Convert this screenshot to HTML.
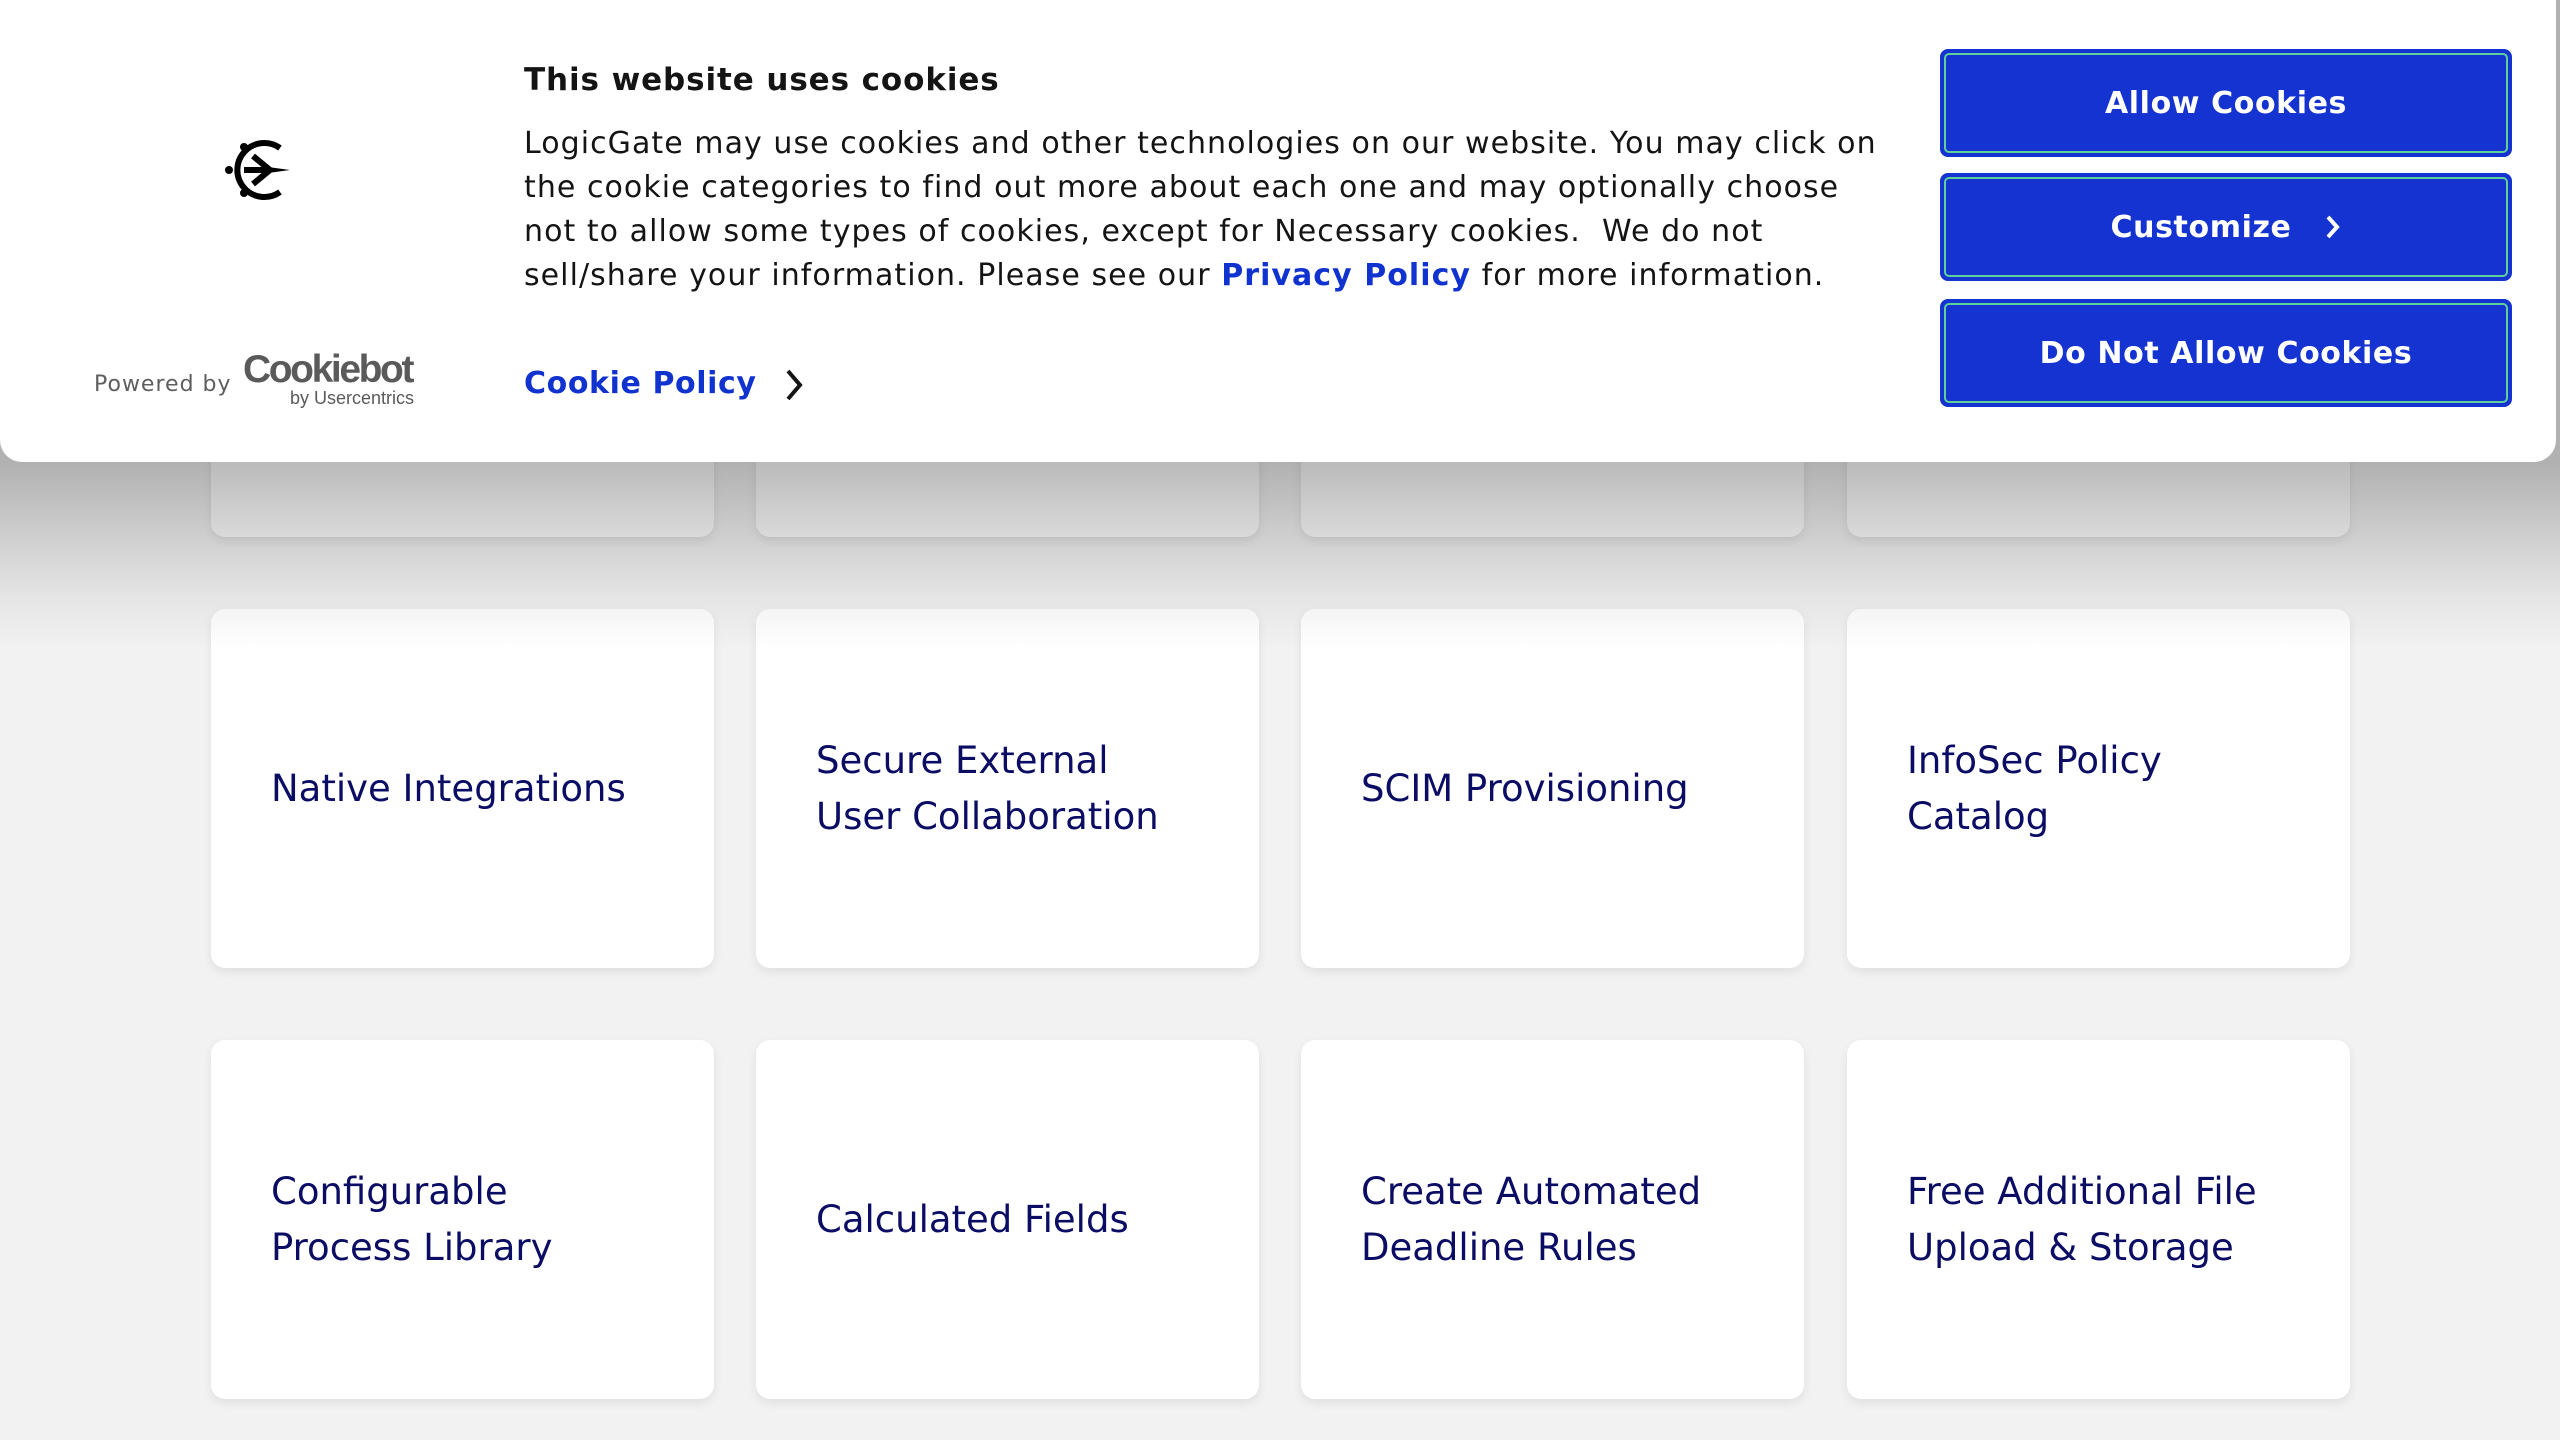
<!DOCTYPE html>
<html><head><meta charset="utf-8">
<style>
*{margin:0;padding:0;box-sizing:border-box}
html,body{width:2560px;height:1440px;overflow:hidden;background:#f2f2f2;font-family:"DejaVu Sans","Liberation Sans",sans-serif}
.card{position:absolute;width:503px;height:359px;background:#fff;border-radius:14px;box-shadow:0 4px 10px rgba(0,0,0,.08);display:flex;align-items:center;padding-left:60px;color:#0b0c63;font-size:37px;line-height:56px}
.shade{position:absolute;left:0;top:0;width:2560px;height:660px;background:linear-gradient(rgba(0,0,0,.27) 0,rgba(0,0,0,.27) 462px,rgba(0,0,0,.14) 540px,rgba(0,0,0,.05) 600px,rgba(0,0,0,0) 650px);pointer-events:none}
.dlg{position:absolute;left:0;top:0;width:2556px;height:462px;background:#fff;border-radius:0 0 22px 22px}
.t{position:absolute;left:524px;top:62px;font-size:31px;font-weight:bold;color:#141414;letter-spacing:.9px}
.b{position:absolute;left:524px;top:122px;font-size:30px;line-height:44px;color:#141414;letter-spacing:1.05px;white-space:nowrap}
.b a{color:#1032cf;font-weight:bold;text-decoration:none}
.cp{position:absolute;left:524px;top:366px;font-size:30px;font-weight:bold;color:#1032cf;letter-spacing:.6px}
.btn{position:absolute;left:1940px;width:572px;height:108px;background:#1433d0;border-radius:8px;border:3px solid #1433d0;color:#fff;font-weight:bold;font-size:30px;letter-spacing:.6px;display:flex;align-items:center;justify-content:center}
.btn::before{content:"";position:absolute;inset:1px;border:2px solid #5fcf9c;border-radius:5px}
.pw{position:absolute;left:94px;top:372px;font-size:22px;color:#5e5e5e;letter-spacing:1px}
.cb{position:absolute;left:243px;top:348px;font-family:"Liberation Sans",sans-serif;font-weight:bold;font-size:39px;color:#5a5a5a;letter-spacing:-2.4px}
.cb2{position:absolute;left:290px;top:388px;font-family:"Liberation Sans",sans-serif;font-size:18px;color:#5a5a5a}
</style></head><body>
<div class="card" style="left:211px;top:178px"></div>
<div class="card" style="left:756px;top:178px"></div>
<div class="card" style="left:1301px;top:178px"></div>
<div class="card" style="left:1847px;top:178px"></div>

<div class="card" style="left:211px;top:609px">Native Integrations</div>
<div class="card" style="left:756px;top:609px">Secure External<br>User Collaboration</div>
<div class="card" style="left:1301px;top:609px">SCIM Provisioning</div>
<div class="card" style="left:1847px;top:609px">InfoSec Policy<br>Catalog</div>
<div class="card" style="left:211px;top:1040px">Configurable<br>Process Library</div>
<div class="card" style="left:756px;top:1040px">Calculated Fields</div>
<div class="card" style="left:1301px;top:1040px">Create Automated<br>Deadline Rules</div>
<div class="card" style="left:1847px;top:1040px">Free Additional File<br>Upload &amp; Storage</div>
<div class="shade"></div>

<div class="dlg">
<svg style="position:absolute;left:220px;top:134px" width="76" height="72" viewBox="0 0 76 72">
<path d="M60 14 A27 27 0 1 0 60 58" fill="none" stroke="#000" stroke-width="6"/>
<circle cx="24" cy="13" r="4" fill="#000"/><circle cx="24" cy="59" r="4" fill="#000"/><circle cx="9" cy="36" r="4" fill="#000"/>
<path d="M24 33 H48 L70 36 L48 39 H24 Z" fill="#000"/>
<path d="M33 22 L50 36 L33 50" fill="none" stroke="#000" stroke-width="6"/>
</svg>
<div class="pw">Powered by</div>
<div class="cb">Cookiebot</div>
<div class="cb2">by Usercentrics</div>
<div class="t">This website uses cookies</div>
<div class="b">LogicGate may use cookies and other technologies on our website. You may click on<br>the cookie categories to find out more about each one and may optionally choose<br>not to allow some types of cookies, except for Necessary cookies.&nbsp; We do not<br>sell/share your information. Please see our <a>Privacy Policy</a> for more information.</div>
<div class="cp">Cookie Policy</div>
<svg style="position:absolute;left:784px;top:368px" width="22" height="34" viewBox="0 0 22 34"><path d="M4 3 L16 17 L4 31" fill="none" stroke="#141414" stroke-width="4"/></svg>
<div class="btn" style="top:49px">Allow Cookies</div>
<div class="btn" style="top:173px">Customize<svg style="margin-left:34px" width="16" height="26" viewBox="0 0 16 26"><path d="M3 3 L12 13 L3 23" fill="none" stroke="#fff" stroke-width="4"/></svg></div>
<div class="btn" style="top:299px">Do Not Allow Cookies</div>
</div>
</body></html>
